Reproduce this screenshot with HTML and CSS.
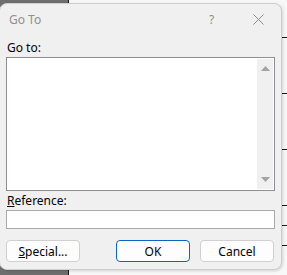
FILE: index.html
```html
<!DOCTYPE html>
<html lang="en">
<head>
    <meta charset="UTF-8">
    <meta name="viewport" content="width=device-width, initial-scale=1.0">
    <title>Go To</title>
    <link rel="stylesheet" href="styles.css">
</head>
<body>
    <div class="desk">
        <div class="sheet-dark"></div>
        <div class="sheet-vline"></div>
        <div class="sheet-line" style="top: 37px"></div>
        <div class="sheet-line" style="top: 93px"></div>
        <div class="sheet-line" style="top: 149px"></div>
        <div class="sheet-line" style="top: 205px"></div>
        <div class="sheet-line" style="top: 225px"></div>
        <div class="sheet-line" style="top: 245px"></div>

        <div class="dialog">
            <div class="titlebar">
                <span class="title">Go To</span>
                <span class="help">?</span>
                <span class="close">
                    <svg width="11" height="11" viewBox="0 0 11 11">
                        <path d="M0.5 0.5 L10.5 10.5 M10.5 0.5 L0.5 10.5" stroke="#8a8a8a" stroke-width="1" fill="none"/>
                    </svg>
                </span>
            </div>

            <div class="body">
                <label class="label">Go to:</label>
                <div class="listbox">
                    <div class="list"></div>
                    <div class="scroll">
                        <svg width="9" height="5" viewBox="0 0 9 5"><path d="M4.5 0 L9 5 L0 5 Z" fill="#a3a3a3"/></svg>
                        <svg width="9" height="5" viewBox="0 0 9 5"><path d="M0 0 L9 0 L4.5 5 Z" fill="#a3a3a3"/></svg>
                    </div>
                </div>

                <label class="label"><u>R</u>eference:</label>
                <input class="ref-input" type="text">

                <div class="buttons">
                    <button class="btn"><u>S</u>pecial...</button>
                    <div class="right-buttons">
                        <button class="btn btn-default">OK</button>
                        <button class="btn">Cancel</button>
                    </div>
                </div>
            </div>
        </div>
    </div>
</body>
</html>
```

FILE: styles.css
```css
body {
    margin: 0;
    padding: 0;
    font-family: "Noto Sans", "Open Sans", sans-serif;
    background-color: #f6f6f6;
}
.desk {
    position: relative;
    width: 287px;
    height: 275px;
    overflow: hidden;
    background-color: #f7f7f7;
}
.sheet-dark {
    position: absolute;
    left: 0;
    top: 0;
    width: 68px;
    height: 275px;
    background-color: #6e6e6e;
}
.sheet-vline {
    position: absolute;
    left: 68px;
    top: 0;
    width: 1px;
    height: 275px;
    background-color: #1a1a1a;
}
.sheet-line {
    position: absolute;
    left: 280px;
    width: 10px;
    height: 1px;
    background-color: #1a1a1a;
}
.dialog {
    position: relative;
    margin-top: 3px;
    margin-left: -1px;
    width: 283px;
    height: 267px;
    background-color: #f0f0f0;
    border: 1px solid #cfcfcf;
    border-radius: 8px;
    box-sizing: border-box;
    box-shadow: 1px 1px 3px rgba(0, 0, 0, 0.15);
}
.titlebar {
    display: flex;
    align-items: center;
    height: 30px;
    padding-left: 9px;
}
.title {
    font-size: 12px;
    color: #8f8f8f;
    flex: 1;
}
.help {
    font-size: 12px;
    color: #8f8f8f;
    width: 44px;
}
.close {
    display: flex;
    align-items: center;
    width: 28px;
    height: 30px;
}
.body {
    padding: 4px 6px 0 6px;
}
.label {
    display: block;
    font-size: 12px;
    color: #000;
    height: 19px;
    line-height: 19px;
    padding-left: 1px;
}
.listbox {
    display: flex;
    height: 134px;
    border: 1px solid #8d8f94;
    background-color: #fff;
    box-sizing: border-box;
}
.list {
    flex: 1;
}
.scroll {
    width: 16px;
    margin: 1px 1px 1px 0;
    background-color: #f0f0f0;
    display: flex;
    flex-direction: column;
    justify-content: space-between;
    align-items: center;
    padding: 7px 0 7px;
    box-sizing: border-box;
}
.ref-input {
    display: block;
    width: 100%;
    height: 19px;
    margin: 0;
    border: 1px solid #a8a8a8;
    box-sizing: border-box;
    background-color: #fff;
}
.buttons {
    display: flex;
    justify-content: space-between;
    margin-top: 11px;
}
.right-buttons {
    display: flex;
    gap: 10px;
    margin-right: 1px;
}
.btn {
    width: 74px;
    height: 22px;
    font-family: "Noto Sans", "Open Sans", sans-serif;
    font-size: 12px;
    color: #000;
    background-color: #fdfdfd;
    border: 1px solid #d0d0d0;
    border-radius: 4px;
    padding: 0;
}
.btn-default {
    border-color: #0a67c0;
}
```
